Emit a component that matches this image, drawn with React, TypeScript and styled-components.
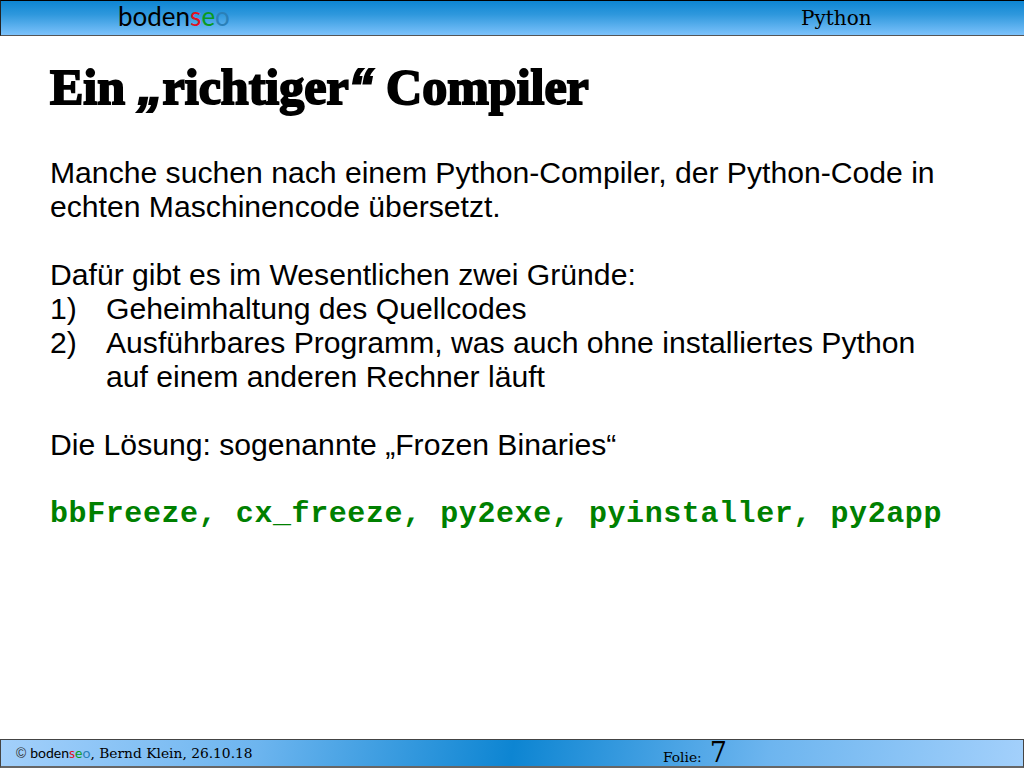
import styled, { createGlobalStyle } from "styled-components";

const GlobalStyle = createGlobalStyle`
  html, body {
    margin: 0;
    padding: 0;
    background: #fff;
  }
`

const Page = styled.div`
  width: 1024px;
  height: 768px;
  display: flex;
  flex-direction: column;
  overflow: hidden;
  font-family: "Liberation Sans", Arial, sans-serif;
  color: #000;
`

const Header = styled.header`
  box-sizing: border-box;
  height: 36px;
  display: flex;
  align-items: center;
  border-top: 1px solid #000;
  border-left: 1px solid #222;
  border-bottom: 1px solid #555;
  background: linear-gradient(to bottom, #0d85d2 0%, #2f98dd 40%, #7cc2fb 100%);
`

const LogoSlot = styled.div`
  width: 800px;
  padding-left: 117px;
  padding-bottom: 5px;
  box-sizing: border-box;
`

const Logo = styled.span<{ $size: number }>`
  font-family: "Lato", sans-serif;
  font-size: ${(p) => p.$size}px;
  color: #000;
`

const LogoLetter = styled.span<{ $color: string }>`
  color: ${(p) => p.$color};
`

const HeaderTitle = styled.div`
  font-family: "DejaVu Serif", serif;
  font-size: 20px;
`

const Main = styled.main`
  flex: 1;
  padding: 23px 50px 0;
`

const Title = styled.h1`
  margin: 0 0 41px;
  font-family: "Liberation Serif", serif;
  font-size: 50px;
  line-height: 56px;
  font-weight: bold;
  -webkit-text-stroke: 2px #000;
`

const Quote = styled.span`
  font-family: "Liberation Sans", sans-serif;
  font-style: italic;
`

const Para = styled.p<{ $flush?: boolean }>`
  margin: 0 0 ${(p) => (p.$flush ? 0 : 34)}px;
  font-size: 30.15px;
  line-height: 34px;
`

const ListRow = styled.div`
  display: grid;
  grid-template-columns: 56px 1fr;
  font-size: 30.15px;
  line-height: 34px;
`

const List = styled.div`
  margin: 0 0 34px;
`

const Code = styled.div`
  padding-top: 1px;
  font-family: "Liberation Mono", monospace;
  font-weight: bold;
  font-size: 30px;
  letter-spacing: 0.58px;
  line-height: 34px;
  color: #008000;
`

const Footer = styled.footer`
  box-sizing: border-box;
  height: 29px;
  display: flex;
  align-items: center;
  border: 1px solid #444;
  border-bottom: 2px solid #666;
  background: linear-gradient(100deg, #a3d0fb 0%, #6db5ef 25%, #0d85d2 50%, #6db5ef 75%, #a3d0fb 100%);
  font-family: "DejaVu Serif", serif;
  font-size: 13.8px;
`

const Credit = styled.div`
  width: 662px;
  padding-left: 15px;
  padding-bottom: 1px;
  box-sizing: border-box;
  display: flex;
  align-items: baseline;
`

const Copyright = styled.span`
  font-family: "Liberation Sans", sans-serif;
  margin-right: 4px;
  color: #333;
`

const SlideLabel = styled.div`
  display: flex;
  align-items: baseline;
  gap: 8px;
`

const SlideNumber = styled.span`
  font-size: 27px;
  line-height: 24px;
`

const BodenseoLogo = ({ size }: { size: number }) => (
  <Logo $size={size}>
    boden
    <LogoLetter $color="#e01020">s</LogoLetter>
    <LogoLetter $color="#0a9a20">e</LogoLetter>
    <LogoLetter $color="#2a80b8">o</LogoLetter>
  </Logo>
)

export default function App() {
  return (
    <Page>
      <GlobalStyle />
      <Header>
        <LogoSlot>
          <BodenseoLogo size={26} />
        </LogoSlot>
        <HeaderTitle>Python</HeaderTitle>
      </Header>
      <Main>
        <Title>Ein <Quote>„</Quote>richtiger<Quote>“</Quote> Compiler</Title>
        <Para>
          Manche suchen nach einem Python-Compiler, der Python-Code in<br />
          echten Maschinencode übersetzt.
        </Para>
        <Para $flush>Dafür gibt es im Wesentlichen zwei Gründe:</Para>
        <List>
          <ListRow>
            <span>1)</span>
            <span>Geheimhaltung des Quellcodes</span>
          </ListRow>
          <ListRow>
            <span>2)</span>
            <span>
              Ausführbares Programm, was auch ohne installiertes Python<br />
              auf einem anderen Rechner läuft
            </span>
          </ListRow>
        </List>
        <Para>Die Lösung: sogenannte „Frozen Binaries“</Para>
        <Code>bbFreeze, cx_freeze, py2exe, pyinstaller, py2app</Code>
      </Main>
      <Footer>
        <Credit>
          <Copyright>©</Copyright>
          <BodenseoLogo size={14} />
          <span>, Bernd Klein, 26.10.18</span>
        </Credit>
        <SlideLabel>
          <span>Folie:</span>
          <SlideNumber>7</SlideNumber>
        </SlideLabel>
      </Footer>
    </Page>
  )
}
